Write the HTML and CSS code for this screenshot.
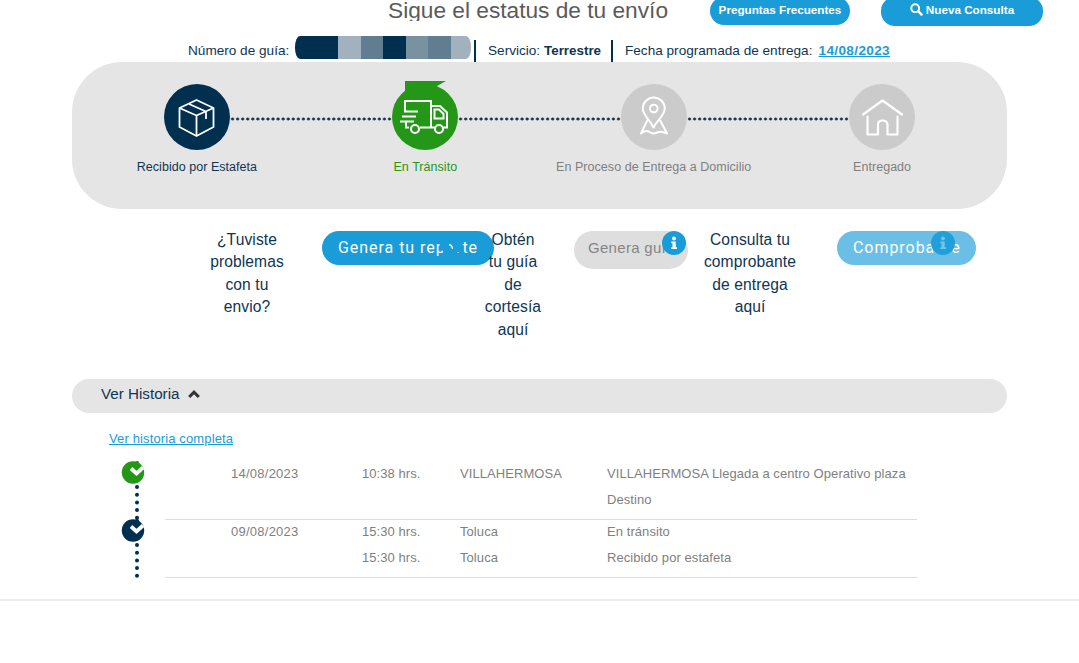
FILE: index.html
```html
<!DOCTYPE html>
<html lang="es">
<head>
<meta charset="utf-8">
<title>Sigue el estatus de tu envío</title>
<link rel="stylesheet" href="styles.css">
</head>
<body>
<header class="header">
  <h1 class="title">Sigue el estatus de tu envío</h1>
  <a class="pill pill-faq">Preguntas Frecuentes</a>
  <a class="pill pill-query"><svg class="search" viewBox="0 0 13 13"><circle cx="5.2" cy="5.2" r="3.9" fill="none" stroke="#fff" stroke-width="2"/><path d="M8.2 8.2L11.6 11.6" stroke="#fff" stroke-width="2.4" stroke-linecap="round"/></svg>Nueva Consulta</a>
</header>

<div class="meta">
  <span class="guide">Número de guía:</span>
  <span class="mask"><i class="m1"></i><i class="m2"></i><i class="m3"></i><i class="m4"></i><i class="m5"></i><i class="m3"></i><i class="m2"></i></span>
  <span class="divider"></span>
  <span class="service">Servicio:</span><b class="service-name">Terrestre</b>
  <span class="divider divider-two"></span>
  <span class="due">Fecha programada de entrega:</span><a class="due-date">14/08/2023</a>
</div>

<main class="content">
  <section class="steps">
    <div class="step">
      <div class="rail"><span class="gap"></span>
        <svg class="disc" viewBox="0 0 66 66"><circle cx="33" cy="33" r="33" fill="#002f4f"/><g fill="none" stroke="#fff" stroke-width="1.8" stroke-linejoin="round"><path d="M32.500 16L49.500 24V43L32.500 52L15.500 43V24Z"/><path d="M15.500 24L32.500 31.500L49.500 24M32.500 31.500V52M25 20L42 27.500V35"/></g></svg>
        <span class="dots"></span></div>
      <p class="label navy">Recibido por Estafeta</p>
    </div>
    <div class="step">
      <div class="rail"><span class="dots"></span>
        <svg class="disc" viewBox="0 0 66 66"><path d="M13 -3H54L45 2V12H13Z" fill="#249719"/><circle cx="33" cy="33" r="33" fill="#249719"/><g fill="none" stroke="#fff" stroke-width="2"><path d="M13 27V17H39V43.500H28M12 27.500H26M10 32.500H24M8 37.500H22M14 38V43.500H17M39 22H48L55 28.500V43.500H51.500M43 43.500H39M42.500 25.500H47L51.500 30V34.500H42.500Z"/><circle cx="23" cy="45" r="4"/><circle cx="47" cy="45" r="4"/></g></svg>
        <span class="dots"></span></div>
      <p class="label green">En Tránsito</p>
    </div>
    <div class="step">
      <div class="rail"><span class="dots"></span>
        <svg class="disc" viewBox="0 0 66 66"><circle cx="33" cy="33" r="33" fill="#cbcbcb"/><g fill="none" stroke="#fff" stroke-width="2" stroke-linejoin="round"><path d="M32.500 43.500C29 36 21.800 31 21.800 24.500A11 11 0 0 1 43.800 24.500C43.800 31 36.500 36 32.500 43.500Z"/><circle cx="32.800" cy="24.500" r="3.800"/><path d="M26.500 36L20 49.500Q25 45.500 28.500 48T36 48.500T46 49.500L39 36"/></g></svg>
        <span class="dots"></span></div>
      <p class="label">En Proceso de Entrega a Domicilio</p>
    </div>
    <div class="step">
      <div class="rail"><span class="dots"></span>
        <svg class="disc" viewBox="0 0 66 66"><circle cx="33" cy="33" r="33" fill="#cbcbcb"/><g fill="none" stroke="#fff" stroke-width="2.200" stroke-linejoin="round" stroke-linecap="round"><path d="M14 30.500L33.500 16.500L53 30.500"/><path d="M18.500 32.500V50.500H29V40.500Q29 36.500 33.500 36.500T38.500 40.500V50.500H48.500V32.500"/></g></svg>
        <span class="gap"></span></div>
      <p class="label">Entregado</p>
    </div>
  </section>

  <section class="actions">
    <p class="ask ask-report">¿Tuviste<br>problemas<br>con tu<br>envio?</p>
    <a class="btn btn-report">Genera tu reporte<svg class="info" viewBox="0 0 24 24"><circle cx="12" cy="12" r="11.500" fill="#1a9cd8"/><path d="M10 13.500Q13 14 13.500 18" fill="none" stroke="#fff" stroke-width="1.300"/></svg></a>
    <p class="ask ask-guide">Obtén<br>tu guía<br>de<br>cortesía<br>aquí</p>
    <a class="btn btn-guide">Genera guía<svg class="info" viewBox="0 0 24 24"><circle cx="12" cy="12" r="12" fill="#1a9cd8"/><g fill="#fff"><circle cx="12" cy="7.500" r="1.900"/><path d="M9.300 10.500H13.700V16.200H15V18H9.300V16.200H10.500V12.300H9.300Z"/></g></svg></a>
    <p class="ask ask-proof">Consulta tu<br>comprobante<br>de entrega<br>aquí</p>
    <a class="btn btn-proof">Comprobante<svg class="info" viewBox="0 0 24 24"><circle cx="12" cy="12" r="12" fill="#209fd9"/><g fill="#74c4e9"><circle cx="12" cy="7.500" r="1.900"/><path d="M9.300 10.500H13.700V16.200H15V18H9.300V16.200H10.500V12.300H9.300Z"/></g></svg></a>
  </section>

  <div class="history-bar">Ver Historia<svg class="chevron" viewBox="0 0 12 8"><path d="M1.200 7L6 2.200L10.800 7" fill="none" stroke="#333" stroke-width="3"/></svg></div>
  <a class="full-link">Ver historia completa</a>

  <section class="history">
    <div class="event">
      <svg class="marker" viewBox="0 0 24 58"><path d="M15 26V58" stroke="#002f4f" stroke-width="4" stroke-linecap="round" stroke-dasharray="0 7.700"/><circle cx="11" cy="11.500" r="11.200" fill="#249719"/><rect x="13" y="0" width="4" height="4" rx="1.500" fill="#249719"/><path d="M9 7.500L14.500 12.500L21 6.500" fill="none" stroke="#fff" stroke-width="3.800"/></svg>
      <div class="row"><span>14/08/2023</span><span class="tight">10:38 hrs.</span><span class="tight">VILLAHERMOSA</span><span class="tight">VILLAHERMOSA Llegada a centro Operativo plaza<br>Destino</span></div>
    </div>
    <div class="event">
      <svg class="marker" viewBox="0 0 24 58"><path d="M15 26V58" stroke="#002f4f" stroke-width="4" stroke-linecap="round" stroke-dasharray="0 7.700"/><circle cx="11" cy="11.500" r="11.200" fill="#002f4f"/><rect x="13" y="0" width="4" height="4" rx="1.500" fill="#002f4f"/><path d="M9 7.500L14.500 12.500L21 6.500" fill="none" stroke="#fff" stroke-width="3.800"/></svg>
      <div class="row"><span>09/08/2023</span><span class="tight">15:30 hrs.<br>15:30 hrs.</span><span class="tight">Toluca<br>Toluca</span><span class="tight">En tránsito<br>Recibido por estafeta</span></div>
    </div>
  </section>
</main>
<footer class="footer"></footer>
</body>
</html>
```
FILE: styles.css
```css
* { box-sizing: border-box; }
body { margin: 0; width: 1079px; height: 663px; overflow: hidden; background: #fff; color: #0f3553; font-family: "Liberation Sans", Arial, sans-serif; }
p, h1 { margin: 0; }
svg { overflow: visible; }

.header { display: flex; align-items: flex-start; height: 36px; padding-left: 388px; }
.title { width: 322px; height: 21px; overflow: hidden; font-size: 22.700px; line-height: 21px; font-weight: 400; color: #5a5a5a; white-space: nowrap; }
.pill { display: flex; align-items: center; justify-content: center; height: 28px; margin-top: -3px; padding-bottom: 3px; border-radius: 14px; background: #1a9cd8; color: #fff; font-size: 11.700px; font-weight: 700; white-space: nowrap; }
.pill-faq { width: 140px; }
.pill-query { width: 162px; height: 29px; margin-left: 31px; padding-bottom: 4px; }
.search { width: 13px; height: 13px; margin-right: 3px; }

.meta { display: flex; align-items: flex-start; height: 26px; padding-left: 188px; font-size: 13.600px; line-height: 29px; white-space: nowrap; }
.guide { width: 107px; }
.mask { display: flex; width: 176px; height: 23px; border-radius: 5px / 11px; overflow: hidden; }
.mask i { flex: 0 0 22.500px; }
.mask .m1 { flex-basis: 43px; background: #002f4f; }
.m2 { background: #a2b1be; }
.m3 { background: #607d92; }
.m4 { background: #002f4f; }
.m5 { background: #7892a2; }
.divider { width: 2px; height: 22px; margin: 4px 12px 0 3px; background: #002f4f; }
.service { width: 56px; }
.service-name { width: 67px; font-size: 13.400px; }
.divider-two { margin: 4px 12px 0 0; }
.due { width: 193.500px; }
.due-date { color: #1a9cd8; font-size: 13.600px; font-weight: 700; letter-spacing: .35px; text-decoration: underline; }

.content { width: 935px; margin-left: 72px; }
.steps { display: grid; grid-template-columns: repeat(4, 228.400px); justify-content: center; height: 147px; padding-top: 22px; border-radius: 50px; background: #e5e5e5; }
.rail { display: flex; align-items: center; height: 66px; }
.gap, .dots { flex: 1; }
.dots { height: 4px; margin-top: 4px; background: radial-gradient(circle, #12354d 1.200px, transparent 1.800px) 0 0 / 5.200px 4px round; }
.disc { flex: 0 0 66px; height: 66px; }
.label { margin-top: 9px; font-size: 12.500px; line-height: 16px; text-align: center; color: #7f7f7f; white-space: nowrap; letter-spacing: .04px; }
.navy { color: #0f3553; }
.green { color: #249719; }

.actions { display: flex; align-items: flex-start; height: 170px; padding: 20px 0 0 137px; }
.ask { font-size: 15.600px; line-height: 22.400px; text-align: center; white-space: nowrap; letter-spacing: .1px; z-index: 1; }
.ask-report { width: 76px; }
.ask-guide { width: 58px; margin-left: -10px; }
.ask-proof { width: 96px; margin-left: 14px; }
.btn { position: relative; height: 34px; margin-top: 2px; padding-left: 16px; border-radius: 17px; background: #1a9cd8; color: #fff; font: 16px/34px Roboto, sans-serif; letter-spacing: .950px; white-space: nowrap; }
.btn-report { width: 172px; margin-left: 37px; }
.btn-guide { width: 114px; height: 38px; margin-left: 32px; padding-left: 14px; border-radius: 19px; background: #dedede; color: #858585; font: 15px/34px "Liberation Sans", Arial, sans-serif; letter-spacing: .3px; }
.btn-proof { width: 139px; margin-left: 39px; background: #6bbfe7; }
.info { position: absolute; top: 0; right: 2px; width: 24px; height: 24px; }
.btn-report .info { right: 31px; }
.btn-proof .info { right: 21px; }

.history-bar { display: flex; align-items: center; height: 34px; padding: 0 0 5px 29px; border-radius: 17px; background: #e5e5e5; font-size: 15.200px; }
.chevron { width: 12px; height: 8px; margin-left: 8px; }
.full-link { display: block; margin: 18px 0 0 37px; font-size: 13px; line-height: 16px; letter-spacing: .13px; color: #1a9cd8; text-decoration: underline; }
.history { margin: 14px 0 0 50px; }
.event { display: flex; height: 58px; }
.marker { flex: 0 0 24px; height: 58px; }
.row { display: grid; grid-template-columns: 131px 98px 147px 1fr; width: 752px; height: 59px; margin-left: 19px; padding-left: 66px; border-bottom: 1px solid #dcdcdc; font-size: 13px; line-height: 26px; color: #7f7f7f; letter-spacing: .25px; white-space: nowrap; }
.tight { letter-spacing: .07px; }
.footer { margin-top: 22px; border-top: 2px solid #ececec; }
```
